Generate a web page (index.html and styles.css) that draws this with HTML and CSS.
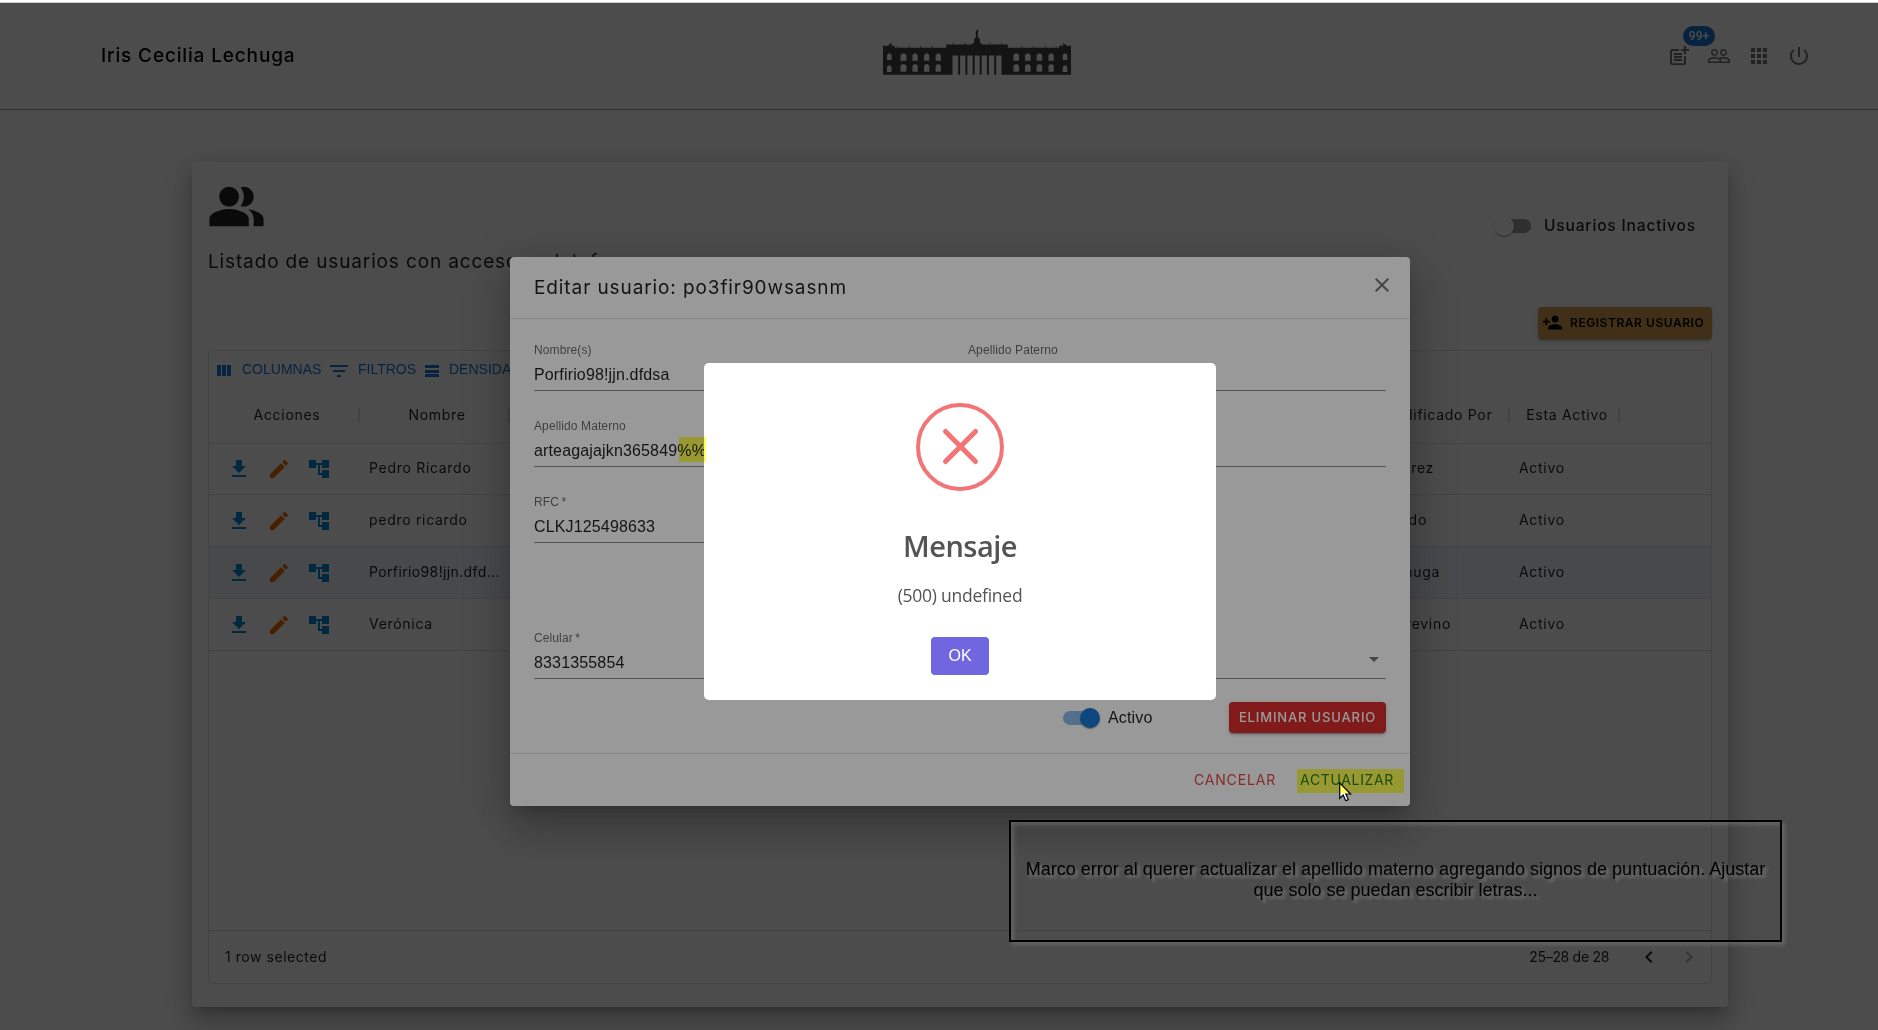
FILE: index.html
```html
<!DOCTYPE html>
<html lang="es">
<head>
<meta charset="utf-8">
<title>Usuarios</title>
<link rel="stylesheet" href="styles.css">
</head>
<body>
<svg class="defs" width="0" height="0">
  <symbol id="download" viewBox="0 0 24 24"><path d="M5 20h14v-2H5v2zM19 9h-4V3H9v6H5l7 7 7-7z"/></symbol>
  <symbol id="edit" viewBox="0 0 24 24"><path d="M3 17.25V21h3.75L17.81 9.94l-3.75-3.75L3 17.25zM20.71 7.04c.39-.39.39-1.02 0-1.41l-2.34-2.34c-.39-.39-1.02-.39-1.41 0l-1.83 1.83 3.75 3.75 1.83-1.83z"/></symbol>
  <symbol id="tree" viewBox="0 0 24 24"><path d="M22 11V3h-7v3H9V3H2v8h7V8h2v10h4v3h7v-8h-7v3h-2V8h2v3z"/></symbol>
</svg>

<header class="topbar">
  <h1 class="user-name">Iris Cecilia Lechuga</h1>
  <svg class="logo" viewBox="66 50 568 145" width="190" height="48">
    <path fill-rule="evenodd" d="M66 107H102V113H257V103H334L341 97V87L347 81L346 66L351 57L354 57L352 80L359 87V97L366 103H443V113H598V107H634V194H424V136H276V194H66Z
      M78 150V135Q85 124 92 135V150ZM78 186V171Q85 160 92 171V186Z
      M119 152V135Q128 124 137 135V152ZM155 152V135Q163 124 171 135V152ZM190 152V135Q198 124 206 135V152ZM225 152V135Q233 124 241 135V152Z
      M119 185V167Q128 156 137 167V185ZM155 185V167Q163 156 171 167V185ZM190 185V167Q198 156 206 167V185ZM225 185V167Q233 156 241 167V185Z
      M460 152V135Q469 124 477 135V152ZM495 152V135Q504 124 512 135V152ZM530 152V135Q539 124 547 135V152ZM566 152V135Q574 124 582 135V152Z
      M460 185V167Q469 156 477 167V185ZM495 185V167Q504 156 512 167V185ZM530 185V167Q539 156 547 167V185ZM566 185V167Q574 156 582 167V185Z
      M609 150V135Q616 124 623 135V150ZM609 186V171Q616 160 623 171V186Z"/>
    <path d="M293 134h6v60h-6zM315 134h6v60h-6zM337 134h6v60h-6zM358 134h6v60h-6zM380 134h6v60h-6zM402 134h6v60h-6z"/>
    <path d="M109 107h2v7h-2zM144 107h2v7h-2zM179 107h2v7h-2zM213 107h2v7h-2zM277 97h2v7h-2zM313 97h2v7h-2zM388 97h2v7h-2zM424 97h2v7h-2zM485 107h2v7h-2zM520 107h2v7h-2zM556 107h2v7h-2zM588 107h2v7h-2zM80 107l11-10 2 10zM608 98l12 6v4h-8z"/>
  </svg>
  <nav class="top-icons">
    <span class="icon-wrap"><svg viewBox="0 0 24 24"><path d="M17 19.22H5V7h7V5H5c-1.1 0-2 .9-2 2v12c0 1.1.9 2 2 2h12c1.1 0 2-.9 2-2v-7h-2v7.22zM19 2h-2v3h-3c.01.01 0 2 0 2h3v2.99c.01.01 2 0 2 0V7h3V5h-3V2zM7 9h8v2H7zM7 12v2h8v-2zM7 15h8v2H7z"/></svg><b class="badge">99+</b></span>
    <svg viewBox="0 0 24 24"><path d="M16.5 13c-1.2 0-3.07.34-4.5 1-1.43-.67-3.3-1-4.5-1C5.33 13 1 14.08 1 16.25V19h22v-2.75c0-2.17-4.33-3.25-6.5-3.25zm-4 4.5h-10v-1.25c0-.54 2.56-1.75 5-1.75s5 1.21 5 1.75v1.25zm9 0H14v-1.25c0-.46-.2-.86-.52-1.22.88-.3 1.96-.53 3.02-.53 2.44 0 5 1.21 5 1.75v1.25zM7.5 12c1.93 0 3.5-1.57 3.5-3.5S9.43 5 7.5 5 4 6.57 4 8.5 5.57 12 7.5 12zm0-5.5c1.1 0 2 .9 2 2s-.9 2-2 2-2-.9-2-2 .9-2 2-2zm9 5.5c1.93 0 3.5-1.57 3.5-3.5S18.43 5 16.5 5 13 6.57 13 8.5s1.57 3.5 3.5 3.5zm0-5.5c1.1 0 2 .9 2 2s-.9 2-2 2-2-.9-2-2 .9-2 2-2z"/></svg>
    <svg viewBox="0 0 24 24"><path d="M4 8h4V4H4v4zm6 12h4v-4h-4v4zm-6 0h4v-4H4v4zm0-6h4v-4H4v4zm6 0h4v-4h-4v4zm6-10v4h4V4h-4zm-6 4h4V4h-4v4zm6 6h4v-4h-4v4zm0 6h4v-4h-4v4z"/></svg>
    <svg viewBox="0 0 24 24"><path d="M13 3h-2v10h2V3zm4.83 2.17l-1.42 1.42C17.99 7.86 19 9.81 19 12c0 3.87-3.13 7-7 7s-7-3.13-7-7c0-2.19 1.01-4.14 2.58-5.42L6.17 5.17C4.23 6.82 3 9.26 3 12c0 4.97 4.03 9 9 9s9-4.03 9-9c0-2.74-1.23-5.18-3.17-6.83z"/></svg>
  </nav>
</header>

<main class="card">
  <div class="card-head">
    <div>
      <svg class="people" viewBox="0 0 24 24"><path d="M16.67 13.13C18.04 14.06 19 15.32 19 17v3h4v-3c0-2.18-3.57-3.47-6.33-3.87zM15 12c2.21 0 4-1.79 4-4s-1.79-4-4-4c-.47 0-.91.1-1.33.24C14.5 5.27 15 6.58 15 8s-.5 2.73-1.33 3.76c.42.14.86.24 1.33.24zM9 12c2.21 0 4-1.79 4-4s-1.79-4-4-4-4 1.79-4 4 1.79 4 4 4zm0 1c-2.67 0-8 1.34-8 4v3h16v-3c0-2.66-5.33-4-8-4z"/></svg>
      <h2 class="card-title">Listado de usuarios con acceso a plataforma</h2>
    </div>
    <label class="inactive"><span class="switch"></span><span>Usuarios Inactivos</span></label>
  </div>
  <div class="actions">
    <button class="register"><svg viewBox="0 0 24 24"><path d="M15 12c2.21 0 4-1.79 4-4s-1.79-4-4-4-4 1.79-4 4 1.79 4 4 4zm-9-2V7H4v3H1v2h3v3h2v-3h3v-2H6zm9 4c-2.67 0-8 1.34-8 4v2h16v-2c0-2.66-5.33-4-8-4z"/></svg><span>REGISTRAR USUARIO</span></button>
  </div>
  <section class="datagrid">
    <div class="toolbar">
      <span class="tool t1"><svg width="18" height="18"><path d="M1 4h4v11H1zM6 4h4v11H6zM11 4h4v11h-4z"/></svg>COLUMNAS</span>
      <span class="tool t2"><svg width="18" height="18"><path d="M0 4h18v2H0zM3 9h12v2H3zM7 14h4v2H7z"/></svg>FILTROS</span>
      <span class="tool t3"><svg width="18" height="18"><path d="M2 4h14v3H2zM2 9h14v3H2zM2 13h14v3H2z"/></svg>DENSIDAD</span>
    </div>
    <div class="cols head">
      <span>Acciones</span><span>Nombre</span><span></span><span>Modificado Por</span><span>Esta Activo</span>
    </div>
    <div class="rows">
      <div class="cols row"><span class="ops"><svg><use href="#download"/></svg><svg class="pen"><use href="#edit"/></svg><svg><use href="#tree"/></svg></span><span>Pedro Ricardo</span><span></span><span class="by" style="width:75px">Pérez</span><span>Activo</span></div>
      <div class="cols row"><span class="ops"><svg><use href="#download"/></svg><svg class="pen"><use href="#edit"/></svg><svg><use href="#tree"/></svg></span><span>pedro ricardo</span><span></span><span class="by" style="width:68px">Ricardo</span><span>Activo</span></div>
      <div class="cols row selected"><span class="ops"><svg><use href="#download"/></svg><svg class="pen"><use href="#edit"/></svg><svg><use href="#tree"/></svg></span><span class="porf">Porfirio98!jjn.dfd...</span><span></span><span class="by" style="width:81px">Lechuga</span><span>Activo</span></div>
      <div class="cols row"><span class="ops"><svg><use href="#download"/></svg><svg class="pen"><use href="#edit"/></svg><svg><use href="#tree"/></svg></span><span>Verónica</span><span></span><span class="by" style="width:92px">Trevino</span><span>Activo</span></div>
    </div>
    <footer class="grid-foot">
      <span class="count">1 row selected</span>
      <span class="range">25–28 de 28</span>
      <svg class="prev" viewBox="0 0 24 24"><path d="M15.41 16.59 10.83 12l4.58-4.59L14 6l-6 6 6 6z"/></svg>
      <svg class="next" viewBox="0 0 24 24"><path d="M8.59 16.59 13.17 12 8.59 7.41 10 6l6 6-6 6z"/></svg>
    </footer>
  </section>
</main>

<div class="backdrop"></div>
<section class="dialog">
  <header class="dialog-head"><h2>Editar usuario: po3fir90wsasnm</h2><svg viewBox="0 0 24 24"><path d="M19 6.41 17.59 5 12 10.59 6.41 5 5 6.41 10.59 12 5 17.59 6.41 19 12 13.41 17.59 19 19 17.59 13.41 12z"/></svg></header>
  <div class="dialog-body">
    <div class="fields">
      <div class="field"><label>Nombre(s)</label><p>Porfirio98!jjn.dfdsa</p></div>
      <div class="field"><label>Apellido Paterno</label><p></p></div>
      <div class="field"><label>Apellido Materno</label><p>arteagajajkn365849%%</p></div>
      <div class="field"><label></label><p></p></div>
      <div class="field"><label>RFC <i>*</i></label><p>CLKJ125498633</p></div>
      <div></div>
      <div class="field last"><label>Celular <i>*</i></label><p>8331355854</p></div>
      <div class="field last select"><label></label><p></p></div>
    </div>
    <div class="controls">
      <label class="active"><span class="switch on"></span><span>Activo</span></label>
      <button class="delete">ELIMINAR USUARIO</button>
    </div>
  </div>
  <footer class="dialog-foot"><span class="cancel">CANCELAR</span><span class="update">ACTUALIZAR</span></footer>
</section>

<div class="backdrop alert-backdrop"></div>
<section class="alert">
  <svg width="88" height="88" viewBox="0 0 88 88"><circle cx="44" cy="44" r="42"/><path class="cross" d="M29.500 28.500 59.500 58.500M59.500 28.500 29.500 58.500"/></svg>
  <h2>Mensaje</h2>
  <p>(500) undefined</p>
  <button>OK</button>
</section>

<div class="note"><p>Marco error al querer actualizar el apellido materno agregando signos de puntuación. Ajustar<br>que solo se puedan escribir letras...</p></div>
<svg class="cursor" width="13" height="20" viewBox="0 0 13 20"><path d="M.7.8V16.300L4.200 13 6.700 18.700 9.300 17.600 6.800 12H11.600Z"/></svg>
<div class="mark mark-signs"></div>
<div class="mark mark-update"></div>
<div class="edge"></div>
</body>
</html>
```
FILE: styles.css
```css
* { box-sizing: border-box; }
body { margin: 0; width: 1878px; height: 1030px; overflow: hidden; background: #fff; position: relative; font-family: Inter, "Open Sans", sans-serif; color: rgba(0,0,0,.87); }
h1, h2, p { margin: 0; font-weight: 400; }
button { border: 0; padding: 0; font-family: inherit; }
svg { display: block; flex: none; }
.defs { position: absolute; }

.topbar { height: 110px; padding-top: 3px; border-bottom: 1px solid #a0a0a0; display: flex; align-items: center; }
.user-name { width: 781px; padding-left: 101px; font-size: 19px; font-weight: 500; letter-spacing: .85px; color: #000; white-space: nowrap; line-height: 30px; flex: none; }
.logo { margin: -10px 0 0 101px; fill: #444; }
.top-icons { margin-left: auto; padding-right: 67px; display: flex; gap: 16px; }
.top-icons svg { width: 24px; height: 24px; fill: #757575; }
.icon-wrap { position: relative; }
.badge { position: absolute; left: 16px; top: -18px; width: 32px; height: 20px; border-radius: 10px; background: #1976d2; color: #fff; font: 500 12px/20px Roboto, sans-serif; text-align: center; }

.card { margin: 52px 150px 0 192px; height: 845px; padding: 15px 16px 23px; border-radius: 4px; background: #fff; box-shadow: 0 8px 10px -5px rgba(0,0,0,.2), 0 16px 24px 2px rgba(0,0,0,.14), 0 6px 30px 5px rgba(0,0,0,.12); display: flex; flex-direction: column; }
.card-head { height: 99px; display: flex; justify-content: space-between; }
.people { width: 59px; height: 59px; margin-left: -1px; fill: #222; }
.card-title { margin: 10px 0 0; line-height: 32px; font-size: 19px; letter-spacing: .86px; white-space: nowrap; }
.inactive { height: 20px; margin: 39px 16px 0 0; display: flex; align-items: center; gap: 13px; font-size: 15.500px; font-weight: 500; letter-spacing: .85px; line-height: 20px; }
.switch { position: relative; width: 34px; height: 14px; border-radius: 7px; background: #9e9e9e; }
.switch::after { content: ""; position: absolute; left: -3px; top: -3px; width: 20px; height: 20px; border-radius: 50%; background: #fff; box-shadow: 0 2px 1px -1px rgba(0,0,0,.2), 0 1px 1px rgba(0,0,0,.14), 0 1px 3px rgba(0,0,0,.12); }
.switch.on { background: #8cbae8; }
.switch.on::after { left: 17px; background: #1976d2; }
.actions { display: flex; justify-content: flex-end; margin: 31px 0 11px; }
.register { width: 174px; height: 32px; padding: 0 0 1px 4px; border-radius: 4px; background: #dba24f; display: flex; align-items: center; gap: 7px; font-size: 12px; font-weight: 600; letter-spacing: .55px; color: #000; white-space: nowrap; box-shadow: 0 3px 1px -2px rgba(0,0,0,.2), 0 2px 2px rgba(0,0,0,.14), 0 1px 5px rgba(0,0,0,.12); }
.register svg { width: 21px; height: 21px; }

.datagrid { flex: 1; border: 1px solid #e0e0e0; border-radius: 4px; display: flex; flex-direction: column; font-size: 14px; letter-spacing: .7px; }
.toolbar { height: 37px; display: flex; align-items: center; padding: 0 0 2px 7px; font: 14px "Liberation Sans", sans-serif; color: #1976d2; }
.toolbar svg { fill: #1976d2; margin-top: 2px; }
.tool { display: flex; align-items: center; letter-spacing: 0; }
.t1 { gap: 8px; width: 114px; }
.t2 { gap: 10px; width: 93px; }
.t3 { gap: 8px; }
.cols { display: grid; grid-template-columns: 150px 150px 850px 150px 110px; align-items: center; }
.head { height: 56px; border-bottom: 1px solid #e0e0e0; margin-bottom: -1px; padding-bottom: 1px; }
.head span { text-align: center; line-height: 14px; height: 14px; padding-left: 7px; margin-right: -1px; border-right: 2px solid #e0e0e0; }
.head span:nth-child(3) { border: 0; }
.rows { flex: 1; }
.row { height: 52px; border-bottom: 1px solid #e0e0e0; }
.row > span { padding: 0 0 2px 10px; white-space: nowrap; }
.row > .by { text-align: right; padding-left: 0; }
.selected { background: rgba(25,118,210,.07); }
.row > .ops { display: flex; gap: 16px; padding: 0 0 0 18px; }
.ops svg { width: 24px; height: 24px; fill: #0288d1; }
.ops .pen { fill: #ed6c02; }
.row > .porf { letter-spacing: .37px; }
.grid-foot { height: 53px; border-top: 1px solid #e0e0e0; display: flex; align-items: center; padding: 0 10px 0 16px; }
.count { margin-right: auto; letter-spacing: .55px; padding-bottom: 2px; }
.range { letter-spacing: -.3px; margin-right: 28px; padding-bottom: 2px; }
.grid-foot svg { width: 24px; height: 24px; }
.prev { margin-right: 16px; fill: #222; }
.next { fill: #b0b0b0; }

.backdrop { position: absolute; inset: 0; background: rgba(0,0,0,.5); }
.alert-backdrop { background: rgba(0,0,0,.4); }
.dialog { position: absolute; left: 510px; top: 257px; width: 900px; height: 549px; border-radius: 4px; background: #fff; display: flex; flex-direction: column; font-family: "Liberation Sans", sans-serif; box-shadow: 0 11px 15px -7px rgba(0,0,0,.2), 0 24px 38px 3px rgba(0,0,0,.14), 0 9px 46px 8px rgba(0,0,0,.12); }
.dialog-head { height: 62px; border-bottom: 1px solid #e0e0e0; padding: 0 16px 0 24px; display: flex; justify-content: space-between; align-items: center; }
.dialog-head h2 { font: 19px/32px Inter, sans-serif; letter-spacing: .9px; }
.dialog-head svg { width: 24px; height: 24px; fill: #757575; margin-top: -6px; }
.dialog-body { flex: 1; padding: 24px 24px 0; }
.fields { display: grid; grid-template-columns: 418px 418px; column-gap: 16px; row-gap: 28px; }
.field { height: 48px; border-bottom: 1px solid #8a8a8a; }
.field.last { margin-top: 60px; }
.field label { display: block; height: 14px; font-size: 12px; line-height: 14px; letter-spacing: .11px; color: rgba(0,0,0,.6); }
.field i { font-style: normal; margin-left: -1px; }
.field p { font-size: 16px; line-height: 36px; letter-spacing: .15px; }
.select p { height: 34px; display: flex; align-items: center; justify-content: flex-end; padding: 0 7px 5px 0; }
.select p::after { content: ""; border: 5px solid transparent; border-top-color: #757575; border-bottom: 0; }
.controls { display: flex; align-items: center; margin-top: 23px; height: 31px; }
.active { display: flex; align-items: center; gap: 11px; margin-left: 529px; font-size: 16px; letter-spacing: .15px; }
.delete { width: 157px; height: 31px; margin-left: auto; border-radius: 4px; background: #d82e2e; color: #fff; font: 500 13px/31px Inter, sans-serif; letter-spacing: .85px; white-space: nowrap; box-shadow: 0 3px 1px -2px rgba(0,0,0,.2), 0 2px 2px rgba(0,0,0,.14), 0 1px 5px rgba(0,0,0,.12); }
.dialog-foot { height: 53px; border-top: 1px solid #e0e0e0; display: flex; align-items: center; justify-content: flex-end; gap: 24px; padding: 0 16px 2px 0; font: 14px Inter, sans-serif; letter-spacing: .65px; }
.cancel { color: #e04848; letter-spacing: .85px; }
.update { color: #2e7d32; }

.alert { position: absolute; left: 704px; top: 363px; width: 512px; height: 337px; background: #fff; border-radius: 5px; padding-top: 40px; display: flex; flex-direction: column; align-items: center; color: #545454; font-family: "Open Sans", sans-serif; }
.alert svg { fill: none; stroke: #f27474; stroke-width: 4; }
.alert .cross { stroke-width: 5; stroke-linecap: round; }
.alert h2 { margin-top: 36px; font-size: 29px; line-height: 38px; font-weight: 600; letter-spacing: -.5px; }
.alert p { margin-top: 17px; font-size: 17.500px; line-height: 26px; letter-spacing: -.25px; }
.alert button { margin-top: 29px; width: 58px; height: 38px; border-radius: 4px; background: #7066e0; color: #fff; font: 16px/38px "Liberation Sans", sans-serif; }

.note { position: absolute; left: 1009px; top: 820px; width: 773px; height: 122px; border: 2px solid #000; box-shadow: 3px 3px 4px rgba(130,130,130,.5), inset 3px 3px 4px rgba(130,130,130,.45); display: flex; justify-content: center; align-items: center; text-align: center; font: 18px/21px "Liberation Sans", sans-serif; color: #000; text-shadow: 3px 3px 3px rgba(150,150,150,.6); white-space: nowrap; padding-bottom: 2px; }
.cursor { position: absolute; left: 1339px; top: 782px; fill: #fff; stroke: #000; stroke-width: 1.200; }
.mark { position: absolute; background: #ffff55; mix-blend-mode: multiply; }
.mark-signs { left: 679px; top: 437px; width: 27px; height: 25px; }
.mark-update { left: 1297px; top: 769px; width: 107px; height: 24px; }
.edge { position: absolute; left: 0; top: 0; width: 100%; height: 3px; background: #fff; border-bottom: 1px solid #ccc; }
```
